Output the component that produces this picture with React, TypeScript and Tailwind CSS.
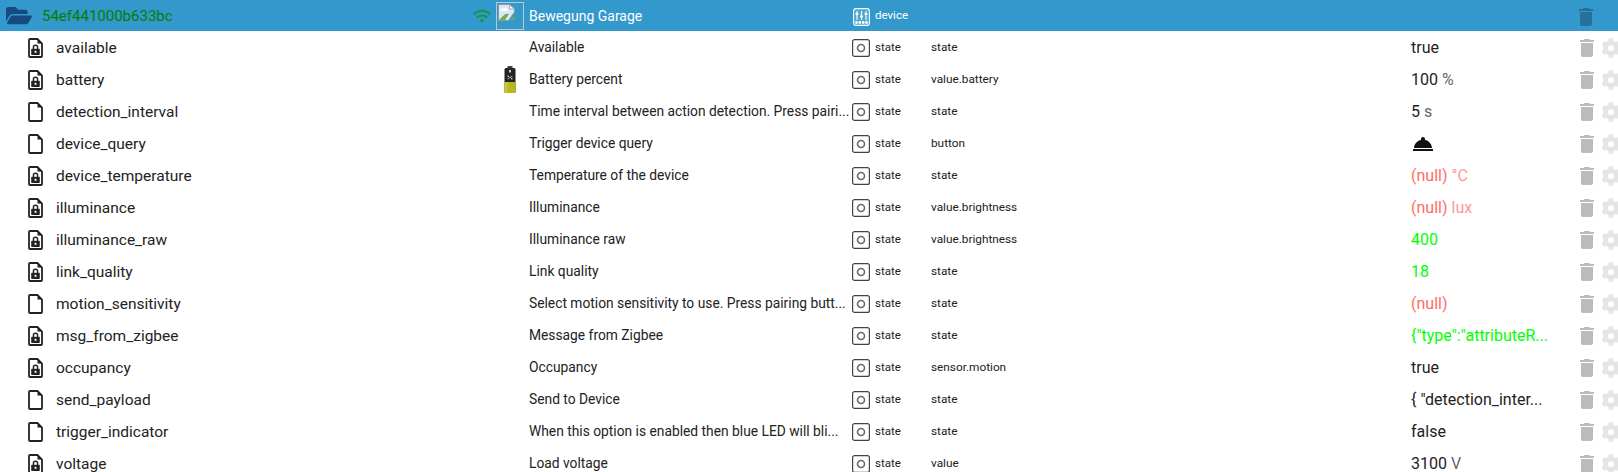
import React from "react";

const FONT = "font-['Roboto','Open_Sans',sans-serif]";

function FileIcon({ locked }: { locked: boolean }) {
  return (
    <svg width="15" height="20" viewBox="0 0 15 20" className="shrink-0">
      <path d="M2 1h7.500l4.500 4.500v12.500a1 1 0 0 1-1 1h-11a1 1 0 0 1-1-1v-16a1 1 0 0 1 1-1z" fill="none" stroke="#222" strokeWidth="1.800" />
      <path d="M9.500 1v4.500h4.500z" fill="#222" />
      {locked && (
        <g fill="#222">
          <rect x="3.200" y="10.700" width="8.600" height="6.300" rx="0.700" />
          <path d="M4.700 11v-1.600a2.800 2.800 0 0 1 5.600 0v1.600h-1.400v-1.600a1.400 1.400 0 0 0-2.800 0v1.600z" />
          <circle cx="7.500" cy="13.800" r="1.100" fill="#fff" />
        </g>
      )}
    </svg>
  );
}

function Trash({ color }: { color: string }) {
  return (
    <svg width="24" height="24" viewBox="0 0 24 24" className="mt-[2px] shrink-0">
      <path fill={color} d="M6 19c0 1.100.9 2 2 2h8c1.100 0 2-.9 2-2V7H6v12zM19 4h-3.500l-1-1h-5l-1 1H5v2h14V4z" />
    </svg>
  );
}

function Gear() {
  return (
    <svg width="20" height="20" viewBox="0 0 512 512" className="mt-[2px] shrink-0">
      <path fill="#e4e4e4" d="M487.4 315.7l-42.6-24.6c4.3-23.2 4.3-47 0-70.2l42.6-24.6c4.9-2.8 7.1-8.6 5.5-14-11.1-35.6-30-67.8-54.7-94.6-3.8-4.1-10-5.1-14.8-2.3L380.8 110c-17.9-15.4-38.5-27.3-60.8-35.1V25.8c0-5.6-3.9-10.5-9.4-11.7-36.7-8.2-74.3-7.8-109.2 0-5.5 1.2-9.4 6.1-9.4 11.7V75c-22.2 7.9-42.8 19.8-60.8 35.1L88.7 85.5c-4.9-2.8-11-1.9-14.8 2.3-24.7 26.7-43.6 58.9-54.7 94.6-1.7 5.4.6 11.2 5.5 14L67.3 221c-4.3 23.2-4.3 47 0 70.2l-42.6 24.6c-4.9 2.8-7.1 8.6-5.5 14 11.1 35.6 30 67.8 54.7 94.6 3.8 4.1 10 5.1 14.8 2.3l42.6-24.6c17.9 15.4 38.5 27.3 60.8 35.1v49.2c0 5.6 3.9 10.5 9.4 11.7 36.7 8.2 74.3 7.8 109.2 0 5.5-1.2 9.4-6.1 9.4-11.7v-49.2c22.2-7.9 42.8-19.8 60.8-35.1l42.6 24.6c4.9 2.8 11 1.9 14.8-2.3 24.7-26.7 43.6-58.9 54.7-94.6 1.5-5.5-.7-11.3-5.6-14.1zM256 336c-44.1 0-80-35.9-80-80s35.9-80 80-80 80 35.9 80 80-35.9 80-80 80z" />
    </svg>
  );
}

function StateIcon() {
  return (
    <svg width="18" height="18" viewBox="0 0 18 18" className="mt-[2px] shrink-0">
      <rect x="0.600" y="0.600" width="16.800" height="16.800" rx="2" fill="#fff" stroke="#444" strokeWidth="1.200" />
      <circle cx="9" cy="9" r="3.500" fill="none" stroke="#666" strokeWidth="1.600" />
    </svg>
  );
}

function DeviceIcon() {
  return (
    <svg width="17" height="18" viewBox="0 0 17 18" className="mt-[2px] shrink-0">
      <rect x="0.600" y="0.600" width="15.800" height="16.800" rx="2.500" fill="#ffffff22" stroke="#fff" strokeWidth="1.100" />
      <g stroke="#fff" strokeWidth="1.100">
        <path d="M4 3v9M8.500 3v9M13 3v9" />
      </g>
      <g fill="#fff">
        <rect x="2.600" y="5" width="2.800" height="2" />
        <rect x="7.100" y="7.500" width="2.800" height="2" />
        <rect x="11.600" y="5" width="2.800" height="2" />
        <circle cx="3.500" cy="14.500" r="1.400" />
        <circle cx="6.800" cy="14.500" r="1.400" />
        <circle cx="10.200" cy="14.500" r="1.400" />
        <circle cx="13.500" cy="14.500" r="1.400" />
      </g>
    </svg>
  );
}

function BrokenImage() {
  return (
    <svg width="18" height="17" viewBox="0 0 18 17" className="shrink-0">
      <path d="M0.500 0.500h11l5 4.500v3l-6 8.500h-10z" fill="#d8e8f6" stroke="#8f979e" />
      <path d="M11.500 0.500v4.500h5z" fill="#f4f4f4" stroke="#8f979e" strokeWidth="0.700" />
      <path d="M2.500 6c0-1.500 2-2 3-1.300C6.500 3.500 9 4 9 5.500c1 0 1.500 1.500.5 1.500h-6c-1 0-1.500-.5-1-1z" fill="#fff" />
      <path d="M1 16l5-5c1.500-1.200 3-1.500 5-1l-4 6z" fill="#6fae4f" />
      <path d="M12.500 16l4-4.500V16z" fill="#6fae4f" />
    </svg>
  );
}

function Battery() {
  return (
    <svg width="12" height="27" viewBox="0 0 12 27" className="shrink-0">
      <rect x="3.500" y="0" width="5" height="2.500" fill="#444" />
      <rect x="0.500" y="2" width="11" height="25" rx="1.500" fill="#222" />
      <rect x="0.500" y="16" width="11" height="11" rx="1" fill="#b9b91e" />
      <rect x="0.500" y="16" width="3" height="11" fill="#c9c938" />
      <rect x="5" y="4" width="2" height="2.500" fill="#ccc" />
      <path d="M3.500 12.500l5-3v1l-5 3zM3.500 9.500h1.500v1.500H3.500zM7 12h1.500v1.500H7z" fill="#bbb" />
    </svg>
  );
}

type Row = {
  id: string;
  locked: boolean;
  name: string;
  role: string;
  value: string;
  unit?: string;
  color?: string;
  bell?: boolean;
  battery?: boolean;
};

const rows: Row[] = [
  { id: "available", locked: true, name: "Available", role: "state", value: "true" },
  { id: "battery", locked: true, name: "Battery percent", role: "value.battery", value: "100", unit: "%", battery: true },
  { id: "detection_interval", locked: false, name: "Time interval between action detection. Press pairi...", role: "state", value: "5", unit: "s" },
  { id: "device_query", locked: false, name: "Trigger device query", role: "button", value: "", bell: true },
  { id: "device_temperature", locked: true, name: "Temperature of the device", role: "state", value: "(null)", unit: "°C", color: "text-[#ff6b6b]" },
  { id: "illuminance", locked: true, name: "Illuminance", role: "value.brightness", value: "(null)", unit: "lux", color: "text-[#ff6b6b]" },
  { id: "illuminance_raw", locked: true, name: "Illuminance raw", role: "value.brightness", value: "400", color: "text-[#00ff00]" },
  { id: "link_quality", locked: true, name: "Link quality", role: "state", value: "18", color: "text-[#00ff00]" },
  { id: "motion_sensitivity", locked: false, name: "Select motion sensitivity to use. Press pairing butt...", role: "state", value: "(null)", color: "text-[#ff6b6b]" },
  { id: "msg_from_zigbee", locked: true, name: "Message from Zigbee", role: "state", value: '{"type":"attributeR...', color: "text-[#00ff00]" },
  { id: "occupancy", locked: true, name: "Occupancy", role: "sensor.motion", value: "true" },
  { id: "send_payload", locked: false, name: "Send to Device", role: "state", value: '{ "detection_inter...' },
  { id: "trigger_indicator", locked: false, name: "When this option is enabled then blue LED will bli...", role: "state", value: "false" },
  { id: "voltage", locked: true, name: "Load voltage", role: "value", value: "3100", unit: "V" },
];

export default function App() {
  return (
    <div className={`h-[472px] w-[1618px] overflow-hidden bg-white ${FONT}`}>
      <div className="flex h-[31px] items-center bg-[#3399cc] pl-[6px]">
        <svg width="26" height="23" viewBox="0 0 576 512" className="shrink-0">
          <path fill="#164a80" d="M572.694 292.093L500.27 416.248A63.997 63.997 0 0 1 444.989 448H45.025c-18.523 0-30.064-20.093-20.731-36.093l72.424-124.155A64 64 0 0 1 152 256h399.964c18.523 0 30.064 20.093 20.73 36.093zM152 224h328v-48c0-26.510-21.490-48-48-48H272l-64-64H48C21.490 64 0 85.490 0 112v278.046l69.077-118.418C86.214 242.25 117.989 224 152 224z" />
        </svg>
        <span className="ml-[10px] mt-[1px] w-[430px] shrink-0 whitespace-nowrap text-[15px] text-[#008000]">54ef441000b633bc</span>
        <svg width="20" height="20" viewBox="0 0 24 24" className="shrink-0">
          <path fill="#119944" d="M1 9l2 2c4.970-4.970 13.030-4.970 18 0l2-2C16.930 2.930 7.080 2.930 1 9zm8 8l3 3 3-3c-1.650-1.660-4.340-1.660-6 0zm-4-4l2 2c2.760-2.760 7.240-2.760 10 0l2-2C15.140 9.140 8.870 9.140 5 13z" />
        </svg>
        <div className="ml-[4px] flex h-[28px] w-[28px] shrink-0 items-start justify-start border border-[#bcc6cc] pl-[1px] pt-[1px]">
          <BrokenImage />
        </div>
        <span className="ml-[5px] mt-[1px] w-[324px] shrink-0 whitespace-nowrap text-[14px] text-white">Bewegung Garage</span>
        <DeviceIcon />
        <span className="ml-[5px] mt-[1px] w-[699px] shrink-0 text-[11.500px] text-white">device</span>
        <Trash color="#27709c" />
      </div>
      {rows.map((r) => (
        <div key={r.id} className="flex h-8 items-center">
          <div className="ml-[28px] mt-[1px] flex w-[28px] shrink-0">
            <FileIcon locked={r.locked} />
          </div>
          <span className="mt-[3px] w-[431px] shrink-0 text-[15.500px] text-[#222]">{r.id}</span>
          <div className="flex w-[42px] shrink-0 justify-end pr-[13px]">{r.battery && <Battery />}</div>
          <span className="mt-[1px] w-[323px] shrink-0 whitespace-nowrap text-[13.800px] text-[#222]">{r.name}</span>
          <StateIcon />
          <span className="ml-[5px] mt-[2px] w-[56px] shrink-0 text-[11.500px] text-[#222]">state</span>
          <span className="mt-[2px] w-[480px] shrink-0 text-[11.800px] text-[#222]">{r.role}</span>
          <div className={`mt-[1px] w-[164px] shrink-0 whitespace-nowrap text-[16px] ${r.color ?? "text-[#222]"}`}>
            {r.bell ? (
              <svg width="24" height="24" viewBox="0 0 24 24" className="mt-[1px]">
                <path fill="#111" d="M2 17h20v2H2zm11.840-9.210c.1-.24.160-.51.160-.79 0-1.100-.9-2-2-2s-2 .9-2 2c0 .28.060.55.160.79C6.250 8.600 3.270 11.930 3 16h18c-.27-4.070-3.250-7.400-7.160-8.210z" />
              </svg>
            ) : (
              <>
                {r.value}
                {r.unit && <span className="ml-[4px] opacity-70">{r.unit}</span>}
              </>
            )}
          </div>
          <div className="flex shrink-0 items-center gap-[2px]">
            <Trash color="#bbbbbb" />
            <Gear />
          </div>
        </div>
      ))}
    </div>
  );
}
